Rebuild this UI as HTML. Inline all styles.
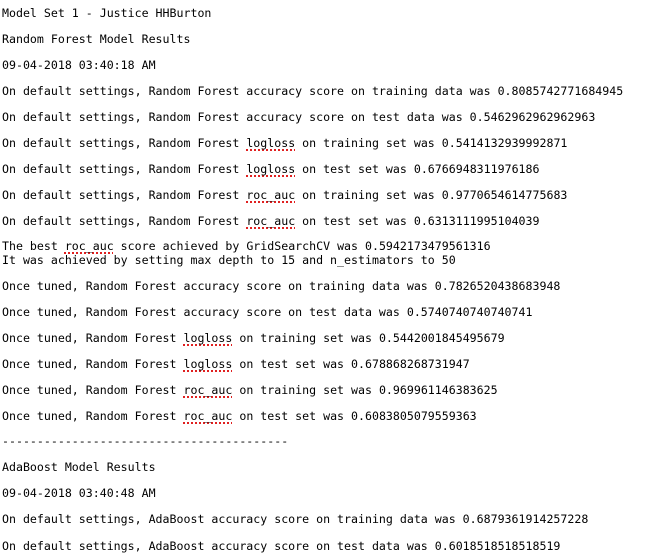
<!DOCTYPE html><html><head><style>
body{margin:0;background:#fff;width:656px;height:559px;overflow:hidden;position:relative}
div{position:absolute;left:2px;font-family:"DejaVu Sans Mono",monospace;font-size:11.6px;line-height:14px;color:#000;white-space:pre}
u{text-decoration:underline dotted #e02020;text-decoration-thickness:2px;text-underline-offset:2px}
</style></head><body>
<div style="top:6px">Model Set 1 - Justice HHBurton</div>
<div style="top:32px">Random Forest Model Results</div>
<div style="top:58px">09-04-2018 03:40:18 AM</div>
<div style="top:84px">On default settings, Random Forest accuracy score on training data was 0.8085742771684945</div>
<div style="top:110px">On default settings, Random Forest accuracy score on test data was 0.5462962962962963</div>
<div style="top:136px">On default settings, Random Forest <u>logloss</u> on training set was 0.5414132939992871</div>
<div style="top:162px">On default settings, Random Forest <u>logloss</u> on test set was 0.6766948311976186</div>
<div style="top:188px">On default settings, Random Forest <u>roc_auc</u> on training set was 0.9770654614775683</div>
<div style="top:214px">On default settings, Random Forest <u>roc_auc</u> on test set was 0.6313111995104039</div>
<div style="top:239px">The best <u>roc_auc</u> score achieved by GridSearchCV was 0.5942173479561316</div>
<div style="top:253px">It was achieved by setting max depth to 15 and n_estimators to 50</div>
<div style="top:279px">Once tuned, Random Forest accuracy score on training data was 0.7826520438683948</div>
<div style="top:305px">Once tuned, Random Forest accuracy score on test data was 0.5740740740740741</div>
<div style="top:331px">Once tuned, Random Forest <u>logloss</u> on training set was 0.5442001845495679</div>
<div style="top:357px">Once tuned, Random Forest <u>logloss</u> on test set was 0.678868268731947</div>
<div style="top:383px">Once tuned, Random Forest <u>roc_auc</u> on training set was 0.969961146383625</div>
<div style="top:409px">Once tuned, Random Forest <u>roc_auc</u> on test set was 0.6083805079559363</div>
<div style="top:434px">-----------------------------------------</div>
<div style="top:460px">AdaBoost Model Results</div>
<div style="top:486px">09-04-2018 03:40:48 AM</div>
<div style="top:512px">On default settings, AdaBoost accuracy score on training data was 0.6879361914257228</div>
<div style="top:539px">On default settings, AdaBoost accuracy score on test data was 0.6018518518518519</div>
</body></html>
